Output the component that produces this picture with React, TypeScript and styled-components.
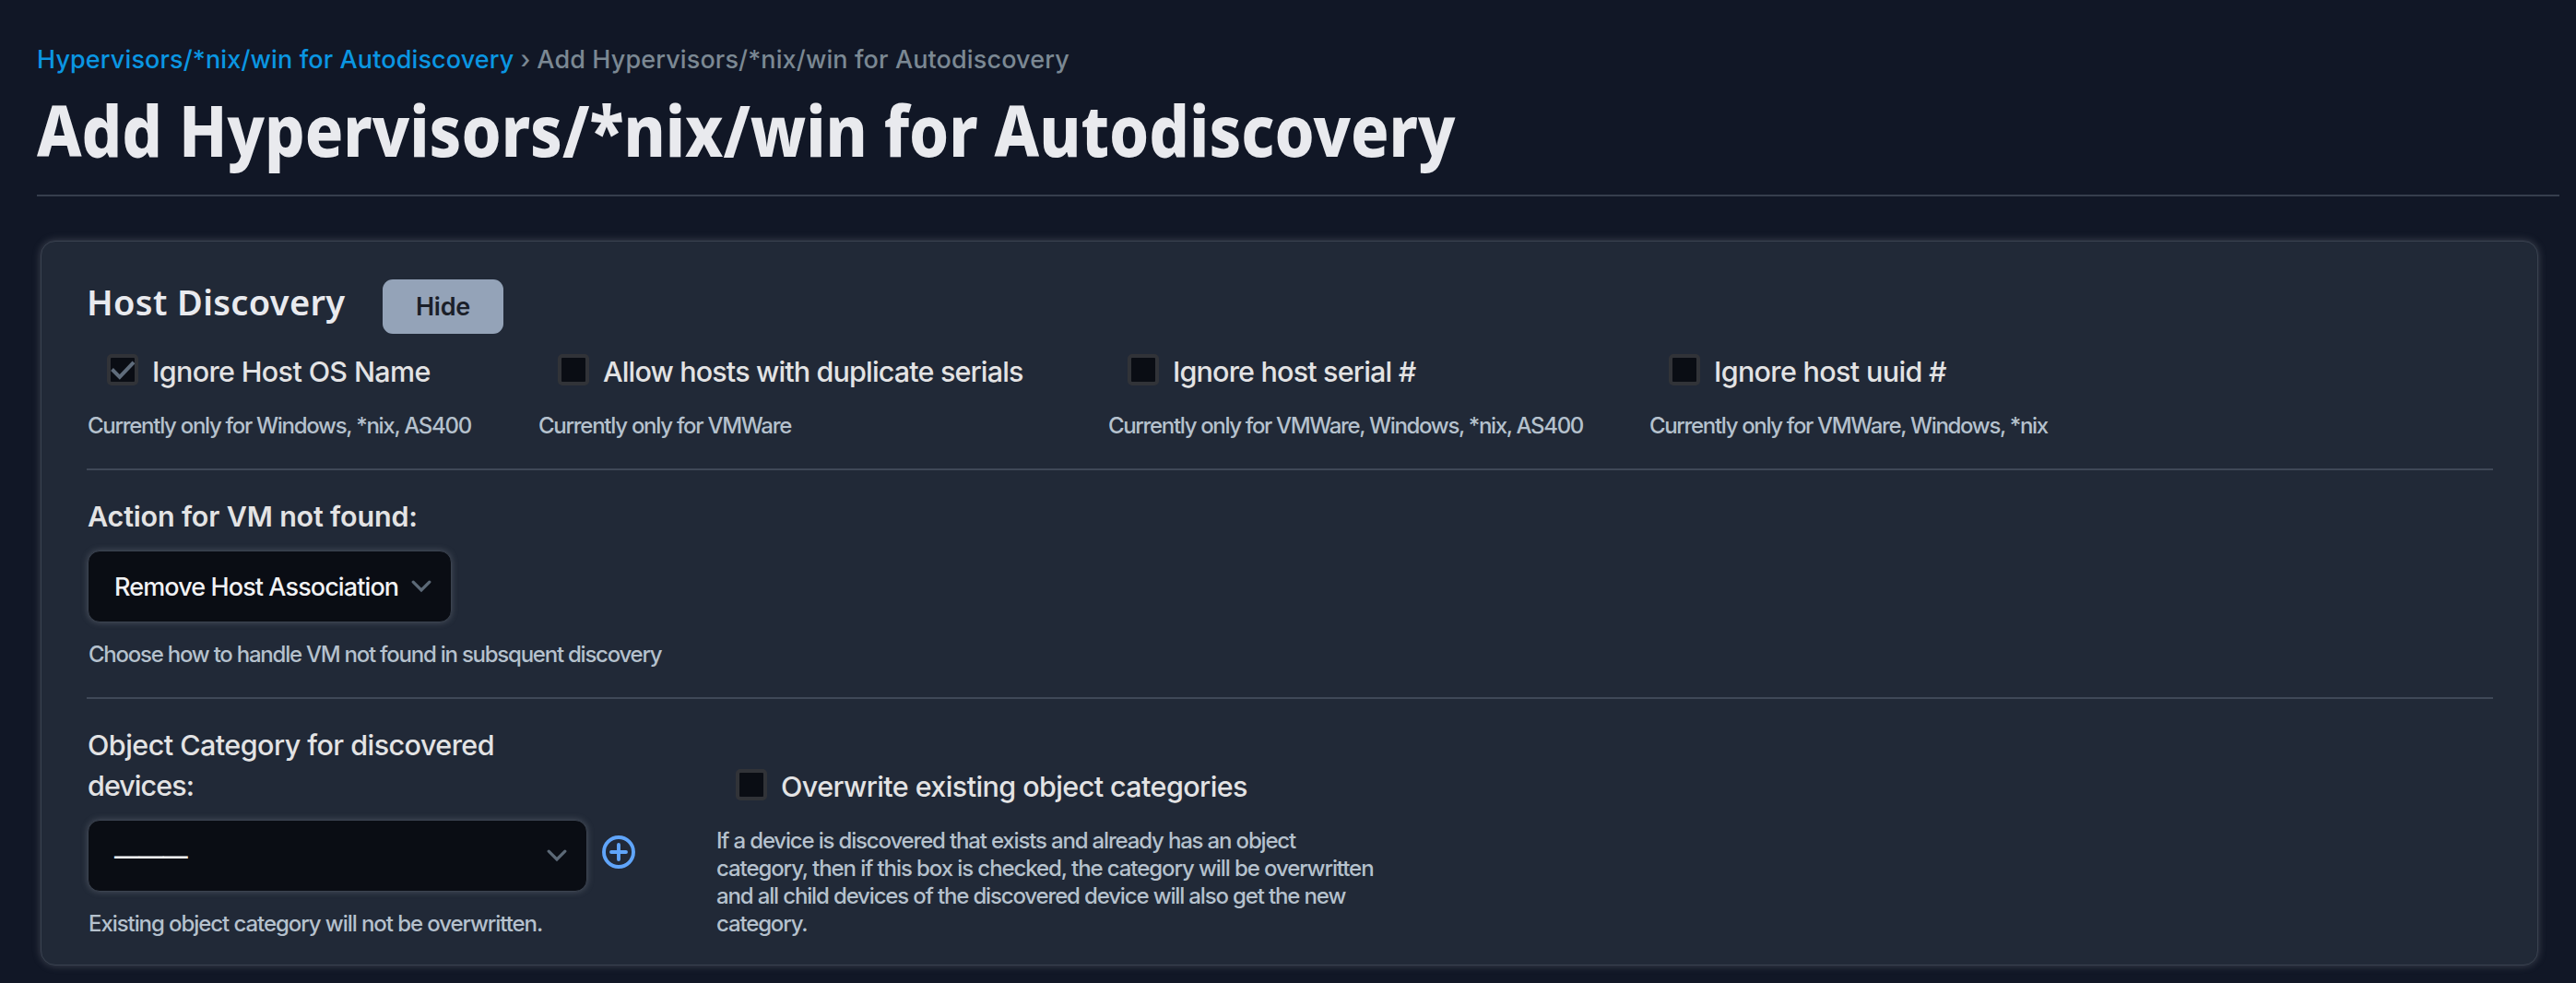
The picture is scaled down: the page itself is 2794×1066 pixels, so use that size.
import React from "react";
import styled, { createGlobalStyle } from "styled-components";

const GlobalStyle = createGlobalStyle`
  *, *::before, *::after { box-sizing: border-box; }
  body {
    margin: 0;
    background: #111726;
    font-family: Inter, "Liberation Sans", sans-serif;
    -webkit-font-smoothing: antialiased;
  }
`;

const Page = styled.main`
  height: 1066px;
  padding: 45px 18px 0 40px;
  overflow: hidden;
`;

const Breadcrumbs = styled.nav`
  display: flex;
  gap: 7px;
  color: #7b8893;
  font-size: 27px;
  font-weight: 500;
  line-height: 40px;
  letter-spacing: 0.12px;
  white-space: nowrap;
`;

const CrumbLink = styled.a`
  color: #0a96e2;
  text-decoration: none;
`;

const PageTitle = styled.h1`
  margin: 11px 0 25px;
  color: #e9eaee;
  font: 800 76px/90px "Noto Sans", sans-serif;
  white-space: nowrap;
  transform: scaleX(0.9035);
  transform-origin: left;
`;

const Rule = styled.hr<{ $tone: string }>`
  height: 2px;
  margin: 0;
  border: 0;
  background: ${(p) => p.$tone};
`;

const Panel = styled.section`
  height: 786px;
  margin: 48px 23px 0 4px;
  padding: 41px 48px 0 49px;
  border: 1px solid #3a4250;
  border-radius: 16px;
  background: #212937;
  box-shadow: 0 0 8px rgba(130, 136, 146, 0.42);
`;

const PanelHeader = styled.header`
  display: flex;
  align-items: flex-start;
  height: 59px;
`;

const PanelTitle = styled.h2`
  width: 321px;
  margin: 0;
  color: #e9eaee;
  font: 600 38px/48px "Noto Sans", sans-serif;
  letter-spacing: 0.35px;
  white-space: nowrap;
`;

const ToggleButton = styled.button`
  width: 131px;
  height: 59px;
  padding: 0;
  border: 0;
  border-radius: 11px;
  background: #94a3b8;
  color: #1b2029;
  font: 600 27px/33px Inter, sans-serif;
  letter-spacing: -0.2px;
`;

const OptionGrid = styled.div`
  display: grid;
  grid-template-columns: 489px 618px 587px 1fr;
  padding: 22px 0 31px;
`;

const CheckRow = styled.label`
  display: flex;
  align-items: flex-start;
  gap: 15px;
  height: 34px;
  margin: 0 0 29px 22px;
`;

const CheckBoxFrame = styled.span`
  display: flex;
  flex: none;
  width: 34px;
  height: 34px;
  border: 4px solid #313338;
  border-radius: 5px;
  background: #0a0d14;
`;

const LabelText = styled.span<{ $track: number }>`
  color: #e3e3e4;
  font-size: 30.5px;
  font-weight: 500;
  line-height: 38px;
  letter-spacing: ${(p) => p.$track}px;
  white-space: nowrap;
`;

const HelpText = styled.p<{ $track: number }>`
  margin: 0;
  padding-left: 1px;
  color: #b5c1cd;
  font-size: 24px;
  font-weight: 500;
  line-height: 30px;
  letter-spacing: ${(p) => p.$track}px;
  white-space: nowrap;
`;

const HelpLine = styled.span<{ $track: number }>`
  display: block;
  letter-spacing: ${(p) => p.$track}px;
`;

const Field = styled.div`
  padding: 28px 0 31px 1px;
`;

const FieldLabel = styled.div<{ $bold?: boolean; $track: number }>`
  margin-bottom: 15px;
  color: #e3e3e4;
  font-size: 30.5px;
  font-weight: ${(p) => (p.$bold ? 600 : 500)};
  line-height: 44px;
  letter-spacing: ${(p) => p.$track}px;
`;

const LabelTail = styled.span`
  display: block;
  letter-spacing: -0.95px;
`;

const SelectRow = styled.div`
  display: flex;
  align-items: center;
  gap: 16px;
  margin-bottom: 20px;
`;

const SelectBox = styled.div<{ $width: number; $track: number }>`
  display: flex;
  align-items: center;
  justify-content: space-between;
  width: ${(p) => p.$width}px;
  height: 78px;
  padding: 0 21px 0 28px;
  border: 1px solid #3a424f;
  border-radius: 13px;
  background: #0a0d14;
  box-shadow: 0 0 7px rgba(130, 136, 146, 0.42);
  color: #f1f2f4;
  font-size: 27px;
  font-weight: 500;
  letter-spacing: ${(p) => p.$track}px;
  white-space: nowrap;
`;

const AddButton = styled.button`
  display: flex;
  margin-bottom: 8px;
  padding: 0;
  border: 0;
  background: none;
`;

const CategoryColumns = styled.div`
  display: grid;
  grid-template-columns: 682px 1fr;
`;

const OverwriteOption = styled.div`
  padding-top: 76px;
`;

const CheckBox = ({ checked }: { checked?: boolean }) => (
  <CheckBoxFrame>
    {checked && (
      <svg width="26" height="26" viewBox="0 0 26 26" fill="none">
        <path d="M1.5 12.5 L9.8 20.8 L25 4.8" stroke="#5f6c7b" strokeWidth="4" />
      </svg>
    )}
  </CheckBoxFrame>
);

const Chevron = () => (
  <svg width="22" height="14" viewBox="0 0 22 14" fill="none">
    <path d="M2.2 2.2 L11 11 L19.8 2.2" stroke="#5c6977" strokeWidth="3.2" strokeLinecap="round" />
  </svg>
);

const PlusCircle = () => (
  <svg width="36" height="36" viewBox="0 0 36 36" fill="none" stroke="#60a5fa" strokeWidth="3.9" strokeLinecap="round">
    <circle cx="18" cy="18" r="16" />
    <path d="M18 10V26M10 18H26" />
  </svg>
);

const options = [
  { label: "Ignore Host OS Name", track: -0.64, help: "Currently only for Windows, *nix, AS400", helpTrack: -1.29, checked: true },
  { label: "Allow hosts with duplicate serials", track: -0.85, help: "Currently only for VMWare", helpTrack: -1.27 },
  { label: "Ignore host serial #", track: -0.82, help: "Currently only for VMWare, Windows, *nix, AS400", helpTrack: -1.34 },
  { label: "Ignore host uuid #", track: -0.66, help: "Currently only for VMWare, Windows, *nix", helpTrack: -1.34 },
];

export default function App() {
  return (
    <>
      <GlobalStyle />
      <Page>
        <Breadcrumbs>
          <CrumbLink>Hypervisors/*nix/win for Autodiscovery</CrumbLink>
          <span>›</span>
          <span>Add Hypervisors/*nix/win for Autodiscovery</span>
        </Breadcrumbs>
        <PageTitle>Add Hypervisors/*nix/win for Autodiscovery</PageTitle>
        <Rule $tone="#363e4d" />

        <Panel>
          <PanelHeader>
            <PanelTitle>Host Discovery</PanelTitle>
            <ToggleButton>Hide</ToggleButton>
          </PanelHeader>

          <OptionGrid>
            {options.map((o) => (
              <div key={o.label}>
                <CheckRow>
                  <CheckBox checked={o.checked} />
                  <LabelText $track={o.track}>{o.label}</LabelText>
                </CheckRow>
                <HelpText $track={o.helpTrack}>{o.help}</HelpText>
              </div>
            ))}
          </OptionGrid>

          <Rule $tone="#3f4857" />
          <Field>
            <FieldLabel $bold $track={-0.18}>Action for VM not found:</FieldLabel>
            <SelectRow>
              <SelectBox $width={395} $track={-0.9}>
                Remove Host Association
                <Chevron />
              </SelectBox>
            </SelectRow>
            <HelpText $track={-1.24}>Choose how to handle VM not found in subsquent discovery</HelpText>
          </Field>

          <Rule $tone="#3f4857" />
          <CategoryColumns>
            <Field>
              <FieldLabel $track={-0.54}>
                Object Category for discovered
                <LabelTail>devices:</LabelTail>
              </FieldLabel>
              <SelectRow>
                <SelectBox $width={542} $track={-0.6}>
                  ———
                  <Chevron />
                </SelectBox>
                <AddButton aria-label="Add">
                  <PlusCircle />
                </AddButton>
              </SelectRow>
              <HelpText $track={-1.07}>Existing object category will not be overwritten.</HelpText>
            </Field>
            <OverwriteOption>
              <CheckRow>
                <CheckBox />
                <LabelText $track={-0.59}>Overwrite existing object categories</LabelText>
              </CheckRow>
              <HelpText $track={-1.12}>
                <HelpLine $track={-1.17}>If a device is discovered that exists and already has an object</HelpLine>
                <HelpLine $track={-1.09}>category, then if this box is checked, the category will be overwritten</HelpLine>
                <HelpLine $track={-1.15}>and all child devices of the discovered device will also get the new</HelpLine>
                <HelpLine $track={-1.15}>category.</HelpLine>
              </HelpText>
            </OverwriteOption>
          </CategoryColumns>
        </Panel>
      </Page>
    </>
  );
}
